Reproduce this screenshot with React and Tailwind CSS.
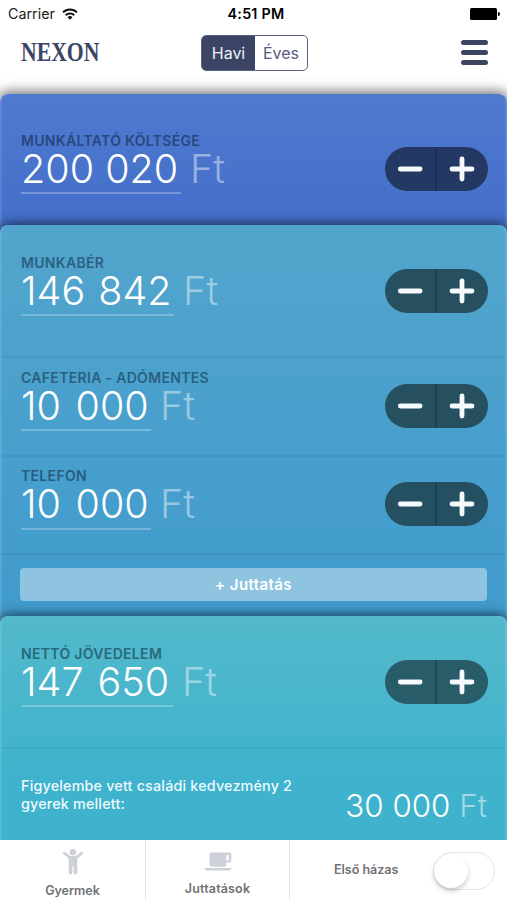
function Stepper({ className, divider }) {
  return (
    <div className={`flex h-[44px] w-[103px] shrink-0 overflow-hidden rounded-full ${className}`}>
      <button className="flex flex-1 items-center justify-center" aria-label="minus">
        <svg width="26" height="26" viewBox="0 0 26 26" stroke="#f6fafc" strokeWidth="4.8" strokeLinecap="round">
          <path d="M3.3 13h19.8" />
        </svg>
      </button>
      <span className={`w-[2px] ${divider}`} />
      <button className="flex flex-1 items-center justify-center pr-[1px]" aria-label="plus">
        <svg width="26" height="26" viewBox="0 0 26 26" stroke="#f6fafc" strokeWidth="4.8" strokeLinecap="round">
          <path d="M3 13h20M13 3v20" />
        </svg>
      </button>
    </div>
  );
}

function Row({ label, value, labelClass, valueClass, className, stepper, divider }) {
  return (
    <div className={`flex items-start justify-between pl-[19px] pr-[17px] ${className}`}>
      <div>
        <div className={`h-[17px] whitespace-nowrap text-[14px] leading-[15px] font-semibold tracking-[0.32px] ${labelClass}`}>{label}</div>
        <div className="flex text-[39.5px] leading-[38px] font-light whitespace-nowrap">
          <span className={`h-[44px] border-b-2 border-white/25 text-white ${valueClass}`}>{value}</span>
          <span className="ml-[9px] text-white/45">Ft</span>
        </div>
      </div>
      <Stepper className={`mt-[14px] ${stepper}`} divider={divider} />
    </div>
  );
}

export default function App() {
  return (
    <div className="flex h-[900px] w-[507px] flex-col overflow-hidden bg-white font-['Inter','Liberation_Sans',sans-serif]">
      <header className="h-[95px] shrink-0">
        <div className="grid h-[27px] grid-cols-3 items-center pr-[7px] pl-[8px] text-[14.3px] text-[#1c1c1c]">
          <div className="flex items-center gap-[7px]">
            <span>Carrier</span>
            <svg width="16" height="12" viewBox="0 0 16 12" fill="none" stroke="#111" strokeWidth="2">
              <path d="M1 4.4a10 10 0 0 1 14 0M3.7 7.3a6.1 6.1 0 0 1 8.6 0" />
              <path d="M8 11.7 5.5 9.2a3.6 3.6 0 0 1 5 0z" fill="#111" stroke="none" />
            </svg>
          </div>
          <div className="pl-[4px] text-center font-semibold tracking-[0.25px] whitespace-nowrap text-black">4:51 PM</div>
          <div className="flex items-center justify-end">
            <span className="h-[12px] w-[27px] rounded-[1.5px] bg-black" />
            <span className="ml-[1px] h-[4px] w-[2px] rounded-r bg-black" />
          </div>
        </div>
        <div className="flex h-[50px] items-center justify-between pr-[19px] pl-[21px]">
          <div className="w-[180px] origin-left scale-x-[0.79] font-['Liberation_Serif',serif] text-[27.5px] leading-none font-bold text-[#3c4565]">
            NEXON
          </div>
          <div className="mt-[2px] flex h-[36px] w-[107px] overflow-hidden rounded-[5px] border border-[#5a6282] text-[16px]">
            <div className="flex flex-1 items-center justify-center bg-[#3b4464] text-[#eef0f6]">Havi</div>
            <div className="flex w-[52px] items-center justify-center text-[#555c7b]">Éves</div>
          </div>
          <div className="flex w-[180px] flex-col items-end gap-[5px]">
            <span className="h-[5px] w-[27px] rounded-full bg-[#3b4562]" />
            <span className="h-[5px] w-[27px] rounded-full bg-[#3b4562]" />
            <span className="h-[5px] w-[27px] rounded-full bg-[#3b4562]" />
          </div>
        </div>
      </header>

      <section className="-mt-px h-[143px] shrink-0 rounded-t-[8px] border-x-2 border-white/10 bg-linear-to-b from-[#507acf] to-[#426ec9] shadow-[0_0_13px_2px_rgba(0,0,0,0.6)]">
        <Row
          label="MUNKÁLTATÓ KÖLTSÉGE"
          value="200 020"
          className="pt-[39px]"
          labelClass="text-[#28477f]"
          valueClass="w-[160px]"
          stepper="bg-[#233862]"
          divider="bg-[#1c2f5a]"
        />
      </section>

      <section className="relative -mt-[12px] h-[403px] shrink-0 rounded-t-[8px] border-x-2 border-white/10 bg-linear-to-b from-[#52a5cc] to-[#3f9bcd] shadow-[0_0_12px_1px_rgba(0,0,0,0.65)]">
        <Row
          label="MUNKABÉR"
          value="146 842"
          className="h-[131px] pt-[30px]"
          labelClass="text-[#2b6180]"
          valueClass="w-[153px] [word-spacing:2px]"
          stepper="bg-[#26505f]"
          divider="bg-[#1c4054]"
        />
        <Row
          label="CAFETERIA - ADÓMENTES"
          value="10 000"
          className="h-[99px] border-t-2 border-[#459ac5] pt-[12px]"
          labelClass="text-[#2a607f]"
          valueClass="w-[130px] [word-spacing:3.5px]"
          stepper="bg-[#26505f]"
          divider="bg-[#1c4054]"
        />
        <Row
          label="TELEFON"
          value="10 000"
          className="h-[98px] border-t-2 border-[#4096c4] pt-[11px]"
          labelClass="text-[#275e7f]"
          valueClass="h-[45px] w-[130px] [word-spacing:3.5px]"
          stepper="bg-[#245061]"
          divider="bg-[#1c4054]"
        />
        <div className="border-t-2 border-[#3b92c3] px-[18px] pt-[13px]">
          <button className="h-[33px] w-full rounded-[4px] bg-[#8fc4e0] pt-[1px] text-[15px] font-semibold tracking-[0.4px] text-white">
            + Juttatás
          </button>
        </div>
      </section>

      <section className="relative -mt-[12px] h-[224px] shrink-0 rounded-t-[8px] border-x-2 border-white/10 bg-linear-to-b from-[#53b9cb] to-[#3fb3cd] to-70% shadow-[0_0_12px_1px_rgba(0,0,0,0.65)]">
        <Row
          label="NETTÓ JÖVEDELEM"
          value="147 650"
          className="h-[131px] pt-[30px]"
          labelClass="text-[#28697b]"
          valueClass="w-[152px] [word-spacing:3px]"
          stepper="bg-[#275c68]"
          divider="bg-[#1e4a5f]"
        />
        <div className="flex h-[93px] justify-between border-t-2 border-[#3dabc3] pr-[18px] pl-[19px]">
          <p className="w-[290px] pt-[28px] text-[14.3px] leading-[17.5px] font-medium tracking-[0.2px] whitespace-nowrap text-[#eefaff]">
            Figyelembe vett családi kedvezmény 2<br />
            gyerek mellett:
          </p>
          <div className="pt-[37px] text-[31.3px] leading-[40px] font-light whitespace-nowrap text-white">
            30 000 <span className="text-white/50">Ft</span>
          </div>
        </div>
      </section>

      <footer className="relative flex h-[60px] shrink-0 bg-white text-[12.5px] font-semibold text-[#717175]">
        <div className="flex w-[146px] flex-col items-center border-r border-[#e4e4e8] pt-[8px]">
          <svg width="22" height="27" viewBox="0 0 22 27" fill="#ced0d8">
            <circle cx="11" cy="4.2" r="3.3" />
            <path d="M2.3 5.2 7.4 9.4h7.2l5.1-4.2" fill="none" stroke="#ced0d8" strokeWidth="2.8" strokeLinecap="round" strokeLinejoin="round" />
            <path d="M6.7 8.6h8.6v16a1.8 1.8 0 0 1-3.7 0V18h-1.2v6.6a1.8 1.8 0 0 1-3.7 0z" />
          </svg>
          <span className="mt-[8px] leading-4">Gyermek</span>
        </div>
        <div className="flex w-[144px] flex-col items-center border-r border-[#e4e4e8] pt-[12px]">
          <svg width="28" height="19" viewBox="0 0 28 19" fill="#ced0d8">
            <path d="M5.5 2a1.5 1.5 0 0 1 1.5-1.5h18.500a1.800 1.800 0 0 1 1.800 1.800v6.500a1.800 1.800 0 0 1-1.800 1.800h-3.200v1.400a2.800 2.800 0 0 1-2.800 2.800H8.300a2.800 2.800 0 0 1-2.800-2.800z" />
            <path d="M22.3 3h2.6v5.4h-2.6z" fill="#fff" />
            <path d="M.5 16h27c-.3 1.6-1.3 2.5-2.6 2.5h-22C1.6 18.5.8 17.6.5 16z" />
          </svg>
          <span className="mt-[10px] tracking-[0.15px] leading-4">Juttatások</span>
        </div>
        <div className="flex flex-1 items-center justify-between pr-[12px] pl-[44px] pt-px">
          <span>Első házas</span>
          <span className="flex h-[38px] w-[62px] items-center rounded-full border-[1.5px] border-[#e4e4e8]">
            <span className="h-[34px] w-[34px] rounded-full bg-white shadow-[0_3px_5px_rgba(0,0,0,0.2)]" />
          </span>
        </div>
      </footer>
    </div>
  );
}
